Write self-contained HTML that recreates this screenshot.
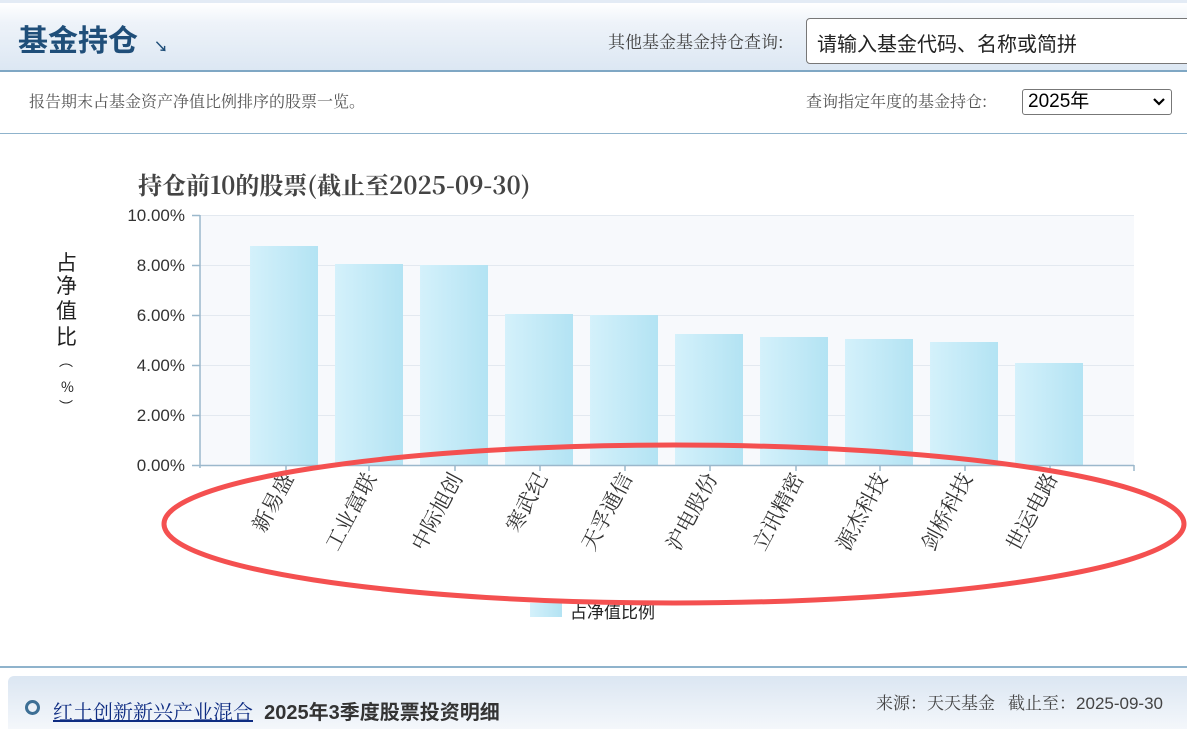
<!DOCTYPE html>
<html><head><meta charset="utf-8"><style>
body{margin:0;width:1187px;height:729px;overflow:hidden;background:#fff;font-family:"Liberation Sans","Noto Sans CJK SC",sans-serif;position:relative}
.hdr{position:absolute;left:0;top:0;width:1187px;height:72px;background:linear-gradient(#fff 0%,#eef3f9 30%,#dce7f3 100%);border-top:3px solid #e3ebf5;box-sizing:border-box;border-bottom:2px solid #7fa7c4}
.t{position:absolute;left:18px;top:13px;font-size:30px;font-weight:bold;color:#1f4e79}
.ar{position:absolute;left:154px;top:34px;font-size:14px;color:#1f4e79;font-weight:bold}
.q{position:absolute;left:608px;top:25px;font-size:17px;color:#444;font-family:"Noto Serif CJK SC",serif}
.in{position:absolute;left:806px;top:15px;width:400px;height:46px;border:1px solid #777;border-radius:4px;background:#fff;box-sizing:border-box;font-size:20px;padding:9px 10px;color:#222}
.sub{position:absolute;left:29px;top:89px;font-size:16px;color:#555;font-family:"Noto Serif CJK SC",serif}
.yq{position:absolute;left:806px;top:89px;font-size:16px;color:#555;font-family:"Noto Serif CJK SC",serif}
.sel{position:absolute;left:1022px;top:89px;width:150px;height:26px;border:1px solid #777;border-radius:3px;box-sizing:border-box;font-size:19px;padding:0 5px;line-height:24px;color:#000}
.line2{position:absolute;left:0;top:133px;width:1187px;height:1px;background:#8fb3cc}
.line3{position:absolute;left:0;top:666px;width:1187px;height:2px;background:#8fb3cc}
.bot{position:absolute;left:8px;top:676px;width:1179px;height:53px;border-radius:6px 0 0 0;background:linear-gradient(#dbe6f2,#f4f7fb)}
</style></head><body>
<div class="hdr"><div class="t">基金持仓</div><div class="ar">↘</div><div class="q">其他基金基金持仓查询:</div><div class="in">请输入基金代码、名称或简拼</div></div>
<div class="sub">报告期末占基金资产净值比例排序的股票一览。</div>
<div class="yq">查询指定年度的基金持仓:</div>
<div class="sel">2025年<svg style="position:absolute;right:6px;top:8px" width="12" height="9"><path d="M1 1L6 6L11 1" stroke="#000" stroke-width="2.2" fill="none"/></svg></div>
<div class="line2"></div>
<svg style="position:absolute;left:0;top:0" width="1187" height="729">
<defs><linearGradient id="g" x1="0" x2="1"><stop offset="0" stop-color="#d4f1fb"/><stop offset="1" stop-color="#b3e3f3"/></linearGradient></defs>
<text x="138" y="194" font-family="Noto Serif CJK SC,serif" font-weight="bold" font-size="24" fill="#444">持仓前10的股票(截止至2025-09-30)</text>
<rect x="200" y="215" width="934" height="250" fill="#f7f9fc"/>
<g stroke="#e3e9f0" stroke-width="1"><line x1="200" x2="1134" y1="215.5" y2="215.5"/><line x1="200" x2="1134" y1="265.5" y2="265.5"/><line x1="200" x2="1134" y1="315.5" y2="315.5"/><line x1="200" x2="1134" y1="365.5" y2="365.5"/><line x1="200" x2="1134" y1="415.5" y2="415.5"/></g>
<g fill="url(#g)">
<rect x="250" y="246" width="68" height="219"/><rect x="335" y="264" width="68" height="201"/><rect x="420" y="265" width="68" height="200"/><rect x="505" y="314" width="68" height="151"/><rect x="590" y="315" width="68" height="150"/><rect x="675" y="334" width="68" height="131"/><rect x="760" y="337" width="68" height="128"/><rect x="845" y="339" width="68" height="126"/><rect x="930" y="342" width="68" height="123"/><rect x="1015" y="363" width="68" height="102"/></g>
<g stroke="#9bb8cc" stroke-width="1.5" fill="none"><line x1="200" y1="215" x2="200" y2="468"/><line x1="192" y1="465.5" x2="1134" y2="465.5"/>
<path d="M192 215.5H200M192 265.5H200M192 315.5H200M192 365.5H200M192 415.5H200M286 465v6M369 465v6M455 465v6M540 465v6M625 465v6M710 465v6M796 465v6M880 465v6M965 465v6M1050 465v6M1134 465v6"/></g>
<g font-size="17" fill="#333" text-anchor="end"><text x="185" y="221">10.00%</text><text x="185" y="271">8.00%</text><text x="185" y="321">6.00%</text><text x="185" y="371">4.00%</text><text x="185" y="421">2.00%</text><text x="185" y="471">0.00%</text></g>
<g font-size="21" fill="#222" font-family="Noto Sans CJK SC,sans-serif"><text x="56" y="270">占</text><text x="56" y="293">净</text><text x="56" y="318">值</text><text x="56" y="344">比</text><text x="59" y="366" font-size="14">︵</text><text x="61" y="392" font-size="14">%</text><text x="59" y="412" font-size="14">︶</text></g>
<g font-size="21" fill="#333" font-family="Noto Serif CJK SC,serif" text-anchor="end">
<text transform="translate(294,478) rotate(-62)">新易盛</text><text transform="translate(377,478) rotate(-62)">工业富联</text><text transform="translate(463,478) rotate(-62)">中际旭创</text><text transform="translate(548,478) rotate(-62)">寒武纪</text><text transform="translate(633,478) rotate(-62)">天孚通信</text><text transform="translate(718,478) rotate(-62)">沪电股份</text><text transform="translate(804,478) rotate(-62)">立讯精密</text><text transform="translate(888,478) rotate(-62)">源杰科技</text><text transform="translate(973,478) rotate(-62)">剑桥科技</text><text transform="translate(1058,478) rotate(-62)">世运电路</text></g>
<rect x="530" y="603" width="32" height="14" fill="url(#g)"/>
<text x="570" y="618" font-size="17" fill="#222" font-family="Noto Sans CJK SC,sans-serif">占净值比例</text>
<ellipse cx="674" cy="524" rx="510" ry="79" fill="none" stroke="#f45050" stroke-width="5"/>
</svg>
<div class="line3"></div>
<div class="bot">
<div style="position:absolute;left:17px;top:24px;width:9px;height:9px;border:3px solid #3d6f95;border-radius:50%"></div>
<div style="position:absolute;left:45px;top:20px;font-size:20px"><span style="color:#0e2c82;text-decoration:underline;font-family:'Noto Serif CJK SC',serif">红土创新新兴产业混合</span> <b style="color:#333">&nbsp;2025年3季度股票投资明细</b></div>
<div style="position:absolute;right:24px;top:13px;font-size:17px;color:#444"><span style="font-family:'Noto Serif CJK SC',serif">来源：天天基金 &nbsp; 截止至：</span>2025-09-30</div>
</div>
</body></html>
